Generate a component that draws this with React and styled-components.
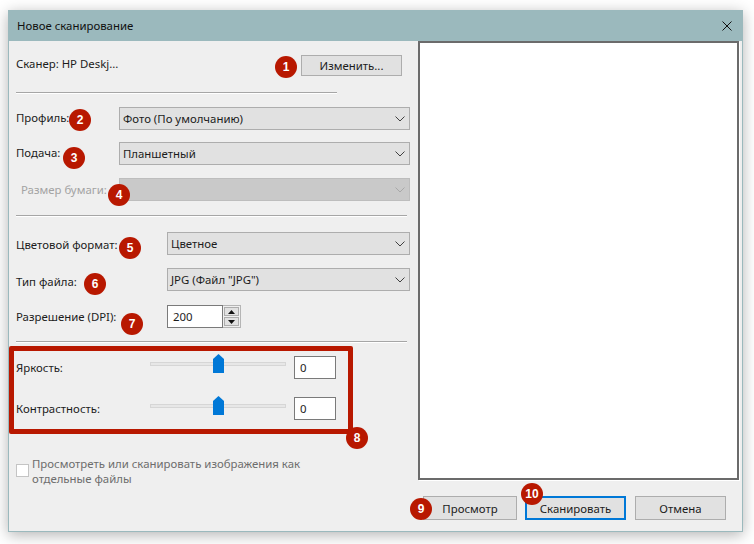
import React from "react";
import styled, { createGlobalStyle } from "styled-components";

const GlobalStyle = createGlobalStyle`
  html, body {
    margin: 0;
    padding: 0;
    background: #ffffff;
    overflow: hidden;
  }
`;

const Page = styled.div`
  position: relative;
  width: 754px;
  height: 544px;
  padding: 10px 0 0 8px;
  box-sizing: border-box;
  font-family: "Noto Sans", "Open Sans", sans-serif;
  font-size: 11.4px;
  color: #1c1c1c;
`;

const Window = styled.div`
  width: 735px;
  height: 522px;
  box-sizing: border-box;
  background: #efefef;
  border: 1px solid #9bb9bd;
  border-top: 0;
  box-shadow: 0 3px 14px rgba(0, 0, 0, 0.3);
  display: flex;
  flex-direction: column;
`;

const TitleBar = styled.div`
  height: 31px;
  flex: none;
  margin: 0 -1px;
  padding: 0 11px 0 9px;
  background: #9bb9bd;
  display: flex;
  align-items: center;
  justify-content: space-between;
  color: #111;
`;

const Content = styled.div`
  flex: 1;
  display: flex;
  padding-left: 7px;
  gap: 8px;
`;

const LeftColumn = styled.div`
  width: 394px;
  flex: none;
  display: flex;
  flex-direction: column;
`;

const RightColumn = styled.div`
  width: 323px;
  flex: none;
  display: flex;
  flex-direction: column;
`;

const Preview = styled.div`
  width: 321px;
  height: 439px;
  box-sizing: border-box;
  background: #fff;
  border: 2px solid #6b6b6b;
  box-shadow: 1px 1px 0 #fff;
`;

const Footer = styled.div`
  display: flex;
  margin-top: 16px;
  padding-left: 5px;
`;

const Button = styled.div`
  height: ${(p) => p.$height || 24}px;
  width: ${(p) => p.$width}px;
  margin-left: ${(p) => p.$gap || 0}px;
  flex: none;
  box-sizing: border-box;
  background: #e1e1e1;
  border: ${(p) => (p.$primary ? "2px solid #0078d7" : "1px solid #adadad")};
  display: flex;
  align-items: center;
  justify-content: center;
`;

const Row = styled.div`
  display: flex;
  height: ${(p) => p.$height || 23}px;
  margin-top: ${(p) => p.$top || 0}px;
  align-items: stretch;
`;

const Label = styled.div`
  width: ${(p) => p.$width}px;
  flex: none;
  margin-top: ${(p) => p.$offset || 0}px;
  padding-left: ${(p) => p.$indent || 0}px;
  box-sizing: border-box;
  line-height: 22px;
  white-space: nowrap;
  color: ${(p) => (p.$disabled ? "#a3a3a3" : "inherit")};
`;

const Divider = styled.div`
  height: 1px;
  width: ${(p) => p.$width}px;
  margin-top: ${(p) => p.$top}px;
  background: #a6a6a6;
  box-shadow: 0 1px 0 #fff;
  flex: none;
`;

const Select = styled.div`
  flex: 1;
  box-sizing: border-box;
  padding: 0 4px 0 3px;
  background: ${(p) => (p.$disabled ? "#c9c9c9" : "#e1e1e1")};
  border: 1px solid ${(p) => (p.$disabled ? "#bdbdbd" : "#adadad")};
  color: #1c1c1c;
  display: flex;
  align-items: center;
  justify-content: space-between;
`;

const Spin = styled.div`
  display: flex;
`;

const TextField = styled.div`
  width: ${(p) => p.$width}px;
  height: 23px;
  box-sizing: border-box;
  background: #fff;
  border: 1px solid #7a7a7a;
  padding-left: ${(p) => p.$pad}px;
  display: flex;
  align-items: center;
`;

const SpinButtons = styled.div`
  width: 18px;
  height: 23px;
  box-sizing: border-box;
  border: 1px solid #b5b5b5;
  border-left: 0;
  padding: 1px;
  display: flex;
  flex-direction: column;
  gap: 1px;
`;

const SpinButton = styled.div`
  flex: 1;
  background: #e1e1e1;
  border: 1px solid #adadad;
  display: flex;
  align-items: center;
  justify-content: center;
`;

const SliderRow = styled.div`
  display: flex;
  height: 23px;
  margin-top: ${(p) => p.$top}px;
`;

const Slider = styled.div`
  position: relative;
  width: 136px;
  height: 23px;
  margin-right: 8px;
  margin-top: ${(p) => p.$offset || 0}px;
  flex: none;
`;

const Track = styled.div`
  position: absolute;
  left: 0;
  right: 0;
  top: 6px;
  height: 4px;
  box-sizing: border-box;
  background: #e7e7e7;
  border: 1px solid #d6d6d6;
`;

const Thumb = styled.svg`
  position: absolute;
  left: 63px;
  top: -2px;
  display: block;
`;

const CheckRow = styled.div`
  display: flex;
  margin-top: ${(p) => p.$top}px;
  gap: 3px;
`;

const CheckBox = styled.div`
  width: 13px;
  height: 13px;
  margin-top: 8px;
  flex: none;
  box-sizing: border-box;
  background: #fff;
  border: 1px solid #c4c4c4;
`;

const CheckText = styled.div`
  width: 300px;
  line-height: 15px;
  color: #6d6d6d;
`;

const Highlight = styled.div`
  position: absolute;
  left: 9px;
  top: 346px;
  width: 344px;
  height: 88px;
  box-sizing: border-box;
  border: 5px solid #b81800;
  border-radius: 2px;
  pointer-events: none;
`;

const Badge = styled.div`
  position: absolute;
  left: ${(p) => p.$x - 11}px;
  top: ${(p) => p.$y - 11}px;
  width: 22px;
  height: 22px;
  border-radius: 50%;
  background: #b81800;
  color: #fff;
  font-family: "Liberation Sans", sans-serif;
  font-size: 12px;
  font-weight: 700;
  display: flex;
  align-items: center;
  justify-content: center;
`;

const Chevron = ({ color = "#404040" }) => (
  <svg width="10" height="6" viewBox="0 0 10 6" fill="none">
    <path d="M0.5 0.5 L5 5 L9.5 0.5" stroke={color} strokeWidth="1" />
  </svg>
);

const Arrow = ({ down }) => (
  <svg width="7" height="4" viewBox="0 0 7 4">
    <path d={down ? "M0 0 H7 L3.5 4 Z" : "M0 4 H7 L3.5 0 Z"} fill="#111" />
  </svg>
);

const CloseIcon = () => (
  <svg width="10" height="10" viewBox="0 0 10 10" fill="none">
    <path d="M0.5 0.5 L9.5 9.5 M9.5 0.5 L0.5 9.5" stroke="#111" strokeWidth="1" />
  </svg>
);

const SliderThumb = () => (
  <Thumb width="11" height="19" viewBox="0 0 11 19">
    <path d="M0 5 L5.5 0 L11 5 V19 H0 Z" fill="#0078d7" />
  </Thumb>
);

const badges = [
  { n: 1, x: 286, y: 67 },
  { n: 2, x: 80, y: 120 },
  { n: 3, x: 74, y: 158 },
  { n: 4, x: 119, y: 195 },
  { n: 5, x: 130, y: 248 },
  { n: 6, x: 95, y: 284 },
  { n: 7, x: 132, y: 324 },
  { n: 8, x: 357, y: 438 },
  { n: 9, x: 421, y: 509 },
  { n: 10, x: 532, y: 494 },
];

const App = () => {
  return (
    <Page>
      <GlobalStyle />
      <Window>
        <TitleBar>
          <span>Новое сканирование</span>
          <CloseIcon />
        </TitleBar>
        <Content>
          <LeftColumn>
            <Row $top={14} $height={21}>
              <Label $width={285} $offset={-2}>Сканер: HP Deskj...</Label>
              <Button $width={101} $height={21}>Изменить...</Button>
            </Row>
            <Divider $width={321} $top={16} />
            <Row $top={14}>
              <Label $width={103}>Профиль:</Label>
              <Select>
                Фото (По умолчанию)
                <Chevron />
              </Select>
            </Row>
            <Row $top={12}>
              <Label $width={103}>Подача:</Label>
              <Select>
                Планшетный
                <Chevron />
              </Select>
            </Row>
            <Row $top={13}>
              <Label $width={103} $indent={5} $offset={1} $disabled>Размер бумаги:</Label>
              <Select $disabled>
                <span />
                <Chevron color="#a8a8a8" />
              </Select>
            </Row>
            <Divider $width={391} $top={14} />
            <Row $top={16}>
              <Label $width={151} $offset={2}>Цветовой формат:</Label>
              <Select>
                Цветное
                <Chevron />
              </Select>
            </Row>
            <Row $top={13}>
              <Label $width={151} $offset={3}>Тип файла:</Label>
              <Select>
                JPG (Файл "JPG")
                <Chevron />
              </Select>
            </Row>
            <Row $top={14}>
              <Label $width={151} $offset={1}>Разрешение (DPI):</Label>
              <Spin>
                <TextField $width={56} $pad={5}>200</TextField>
                <SpinButtons>
                  <SpinButton><Arrow /></SpinButton>
                  <SpinButton><Arrow down /></SpinButton>
                </SpinButtons>
              </Spin>
            </Row>
            <Divider $width={391} $top={13} />
            <SliderRow $top={14}>
              <Label $width={134} $offset={1}>Яркость:</Label>
              <Slider>
                <Track />
                <SliderThumb />
              </Slider>
              <TextField $width={42} $pad={5}>0</TextField>
            </SliderRow>
            <SliderRow $top={18}>
              <Label $width={134} $offset={1}>Контрастность:</Label>
              <Slider $offset={1}>
                <Track />
                <SliderThumb />
              </Slider>
              <TextField $width={42} $pad={5}>0</TextField>
            </SliderRow>
            <CheckRow $top={36}>
              <CheckBox />
              <CheckText>Просмотреть или сканировать изображения как отдельные файлы</CheckText>
            </CheckRow>
          </LeftColumn>
          <RightColumn>
            <Preview />
            <Footer>
              <Button $width={94}>Просмотр</Button>
              <Button $width={101} $gap={8} $primary>Сканировать</Button>
              <Button $width={91} $gap={9}>Отмена</Button>
            </Footer>
          </RightColumn>
        </Content>
      </Window>
      <Highlight />
      {badges.map(({ n, x, y }) => (
        <Badge key={n} $x={x} $y={y}>{n}</Badge>
      ))}
    </Page>
  );
};

export default App;
